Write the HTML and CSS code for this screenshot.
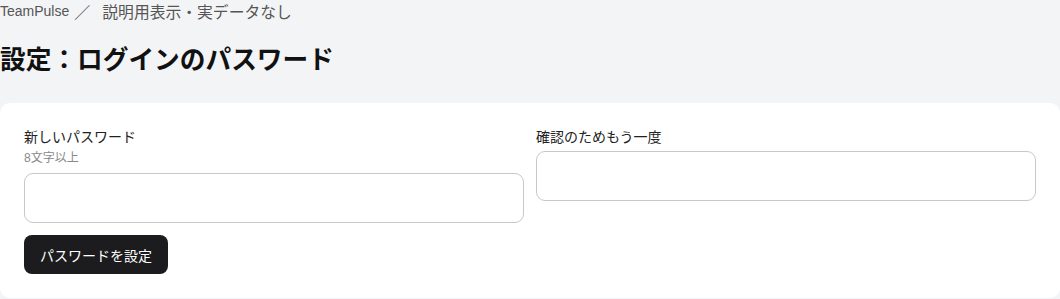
FILE: index.html
```html
<!DOCTYPE html>
<html lang="ja">
<head>
	<meta charset="utf-8">
	<title>設定：ログインのパスワード</title>
	<meta name="viewport" content="width=device-width,initial-scale=1.0" />
	<link rel="stylesheet" href="styles.css">
</head>
<body>
	<div class="crumb">
		<span class="crumb-app">TeamPulse</span><span class="crumb-sep">／</span><span class="crumb-note">説明用表示・実データなし</span>
	</div>
	<h1 class="title">設定：ログインのパスワード</h1>

	<form class="card" onsubmit="return false;">
		<div class="fields">
			<div class="field">
				<label class="lbl" for="pw1">新しいパスワード</label>
				<div class="hint">8文字以上</div>
				<input type="password" id="pw1" class="inp" />
			</div>
			<div class="field">
				<label class="lbl" for="pw2">確認のためもう一度</label>
				<input type="password" id="pw2" class="inp" />
			</div>
		</div>
		<button type="submit" class="btn">パスワードを設定</button>
	</form>
</body>
</html>
```

FILE: styles.css
```css
body {
	margin: 0;
	padding: 0;
	background-color: #f3f4f6;
	color: #111111;
	font-family: "Liberation Sans", "Noto Sans CJK JP", sans-serif;
}
.crumb {
	display: flex;
	align-items: center;
	height: 22px;
	color: #555555;
}
.crumb-app {
	font-size: 14px;
}
.crumb-sep {
	font-size: 16px;
	margin: 0 12px 0 5px;
}
.crumb-note {
	font-size: 15.8px;
}
.title {
	margin: 21px 0 0 0;
	font-size: 25.7px;
	line-height: 34px;
	font-weight: bold;
	color: #111111;
}
.card {
	margin-top: 26px;
	background-color: #ffffff;
	border-radius: 10px;
	padding: 24px 24px 24px 24px;
}
.fields {
	display: grid;
	grid-template-columns: 1fr 1fr;
	gap: 12px;
	align-items: start;
}
.field {
	display: flex;
	flex-direction: column;
}
.lbl {
	font-size: 14px;
	line-height: 20px;
	color: #222222;
	margin-bottom: 4px;
}
.hint {
	font-size: 12px;
	line-height: 16px;
	color: #888888;
	margin-top: -1px;
	margin-bottom: 7px;
}
.inp {
	box-sizing: border-box;
	height: 50px;
	border: 1px solid #c8c8c8;
	border-radius: 9px;
	padding: 0 12px;
	font-size: 14px;
	background: #ffffff;
	outline: none;
}
.btn {
	margin-top: 12px;
	height: 39px;
	padding: 0 16px;
	border: none;
	border-radius: 8px;
	background-color: #1c1c1e;
	color: #ffffff;
	font-family: inherit;
	font-size: 14px;
	cursor: pointer;
}
```
